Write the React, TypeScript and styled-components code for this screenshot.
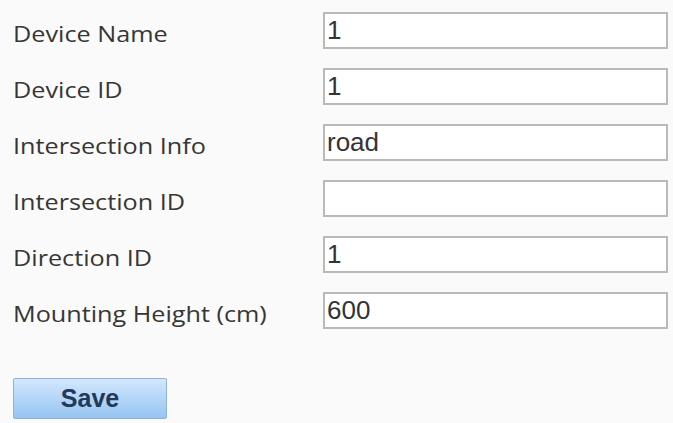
import React from 'react';
import styled, { createGlobalStyle } from 'styled-components';

const GlobalStyle = createGlobalStyle`
    html, body {
        margin: 0;
        padding: 0;
        background-color: #fafafa;
    }
`;

const Page = styled.div`
    width: 673px;
    height: 423px;
    box-sizing: border-box;
    padding: 12px 0 0 13px;
    background-color: #fafafa;
    display: flex;
    flex-direction: column;
`;

const Form = styled.div`
    display: flex;
    flex-direction: column;
    gap: 19px;
`;

const Row = styled.div`
    display: grid;
    grid-template-columns: 310px 345px;
    align-items: center;
    height: 37px;
`;

// the source text is drawn wide, so the label is stretched a little
const Label = styled.label`
    display: inline-block;
    justify-self: start;
    font-family: "Open Sans", "Noto Sans", sans-serif;
    font-size: 21px;
    color: #363636;
    padding-top: 6px;
    white-space: nowrap;
    transform: scaleX(1.2);
    transform-origin: left center;
`;

const Field = styled.input`
    box-sizing: border-box;
    width: 345px;
    height: 37px;
    margin: 0;
    padding: 0 0 0 2px;
    border: 2px solid #b9b9b9;
    background-color: #ffffff;
    font-family: "Liberation Sans", Arial, sans-serif;
    font-size: 26px;
    color: #333333;
    outline: none;
`;

const Actions = styled.div`
    margin-top: 49px;
`;

const SaveButton = styled.button`
    width: 154px;
    height: 41px;
    border: 1px solid #8eb2da;
    border-radius: 2px;
    background: linear-gradient(to bottom, #d3e7fc 0%, #b4d6f8 50%, #95c4f2 100%);
    font-family: "Liberation Sans", Arial, sans-serif;
    font-size: 25px;
    font-weight: bold;
    color: #22395a;
    padding: 0;
    cursor: pointer;
`;

const fields = [
    { label: 'Device Name', value: '1' },
    { label: 'Device ID', value: '1' },
    { label: 'Intersection Info', value: 'road' },
    { label: 'Intersection ID', value: '' },
    { label: 'Direction ID', value: '1' },
    { label: 'Mounting Height (cm)', value: '600' },
];

const App: React.FC = () => {
    return (
        <>
            <GlobalStyle />
            <Page>
                <Form>
                    {fields.map((f) => (
                        <Row key={f.label}>
                            <Label>{f.label}</Label>
                            <Field type="text" defaultValue={f.value} />
                        </Row>
                    ))}
                </Form>
                <Actions>
                    <SaveButton>Save</SaveButton>
                </Actions>
            </Page>
        </>
    );
};

export default App;
